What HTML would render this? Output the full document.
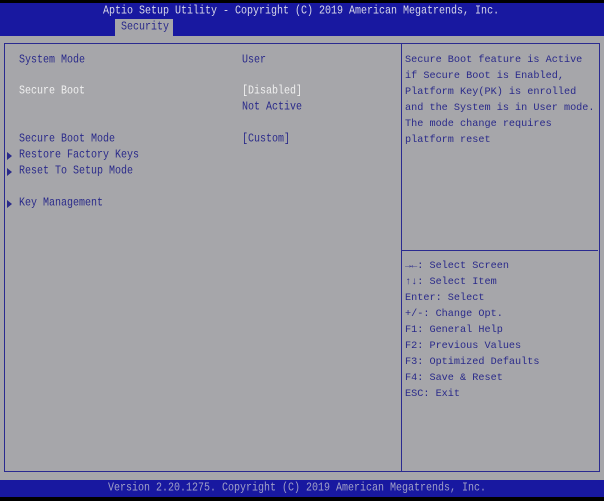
<!DOCTYPE html>
<html><head><meta charset="utf-8"><style>
*{margin:0;padding:0}
body{width:604px;height:501px;background:#000;position:relative;overflow:hidden;font-family:"Liberation Mono",monospace;font-size:10px;color:#2a2a8a}
.t{position:absolute;white-space:pre;line-height:12px;transform:scaleY(1.2);transform-origin:0 0}
#hdr{position:absolute;left:0;top:3px;width:604px;height:33px;background:#1818a0}
#tab{position:absolute;left:115px;top:19px;width:58px;height:17px;background:#a6a6aa}
#main{position:absolute;left:0;top:36px;width:604px;height:444px;background:#a6a6aa}
#box{position:absolute;left:4px;top:43px;width:594px;height:427px;border:1px solid #2a2a90}
#vd{position:absolute;left:401px;top:44px;width:1px;height:427px;background:#2a2a90}
#hd{position:absolute;left:402px;top:250px;width:196px;height:1px;background:#2a2a90}
#ftr{position:absolute;left:0;top:480px;width:604px;height:17px;background:#1818a0}
.w{color:#f0f0f0}
.arr{position:absolute;width:0;height:0;border-left:5px solid #2a2a8a;border-top:4px solid transparent;border-bottom:4px solid transparent}
</style></head><body>
<div id="hdr"></div>
<div class="t w" style="left:103px;top:5px;color:#d8d8e8">Aptio Setup Utility - Copyright (C) 2019 American Megatrends, Inc.</div>
<div id="main"></div>
<div id="tab"></div>
<div class="t" style="left:121px;top:21px">Security</div>
<div id="box"></div><div id="vd"></div><div id="hd"></div>
<div class="t" style="left:19px;top:54px">System Mode</div>
<div class="t" style="left:242px;top:54px">User</div>
<div class="t w" style="left:19px;top:85px">Secure Boot</div>
<div class="t w" style="left:242px;top:85px">[Disabled]</div>
<div class="t" style="left:242px;top:101px">Not Active</div>
<div class="t" style="left:19px;top:133px">Secure Boot Mode</div>
<div class="t" style="left:242px;top:133px">[Custom]</div>
<div class="arr" style="left:7px;top:152px"></div>
<div class="t" style="left:19px;top:149px">Restore Factory Keys</div>
<div class="arr" style="left:7px;top:168px"></div>
<div class="t" style="left:19px;top:165px">Reset To Setup Mode</div>
<div class="arr" style="left:7px;top:200px"></div>
<div class="t" style="left:19px;top:197px">Key Management</div>
<div class="t" style="left:405px;top:53px;line-height:16px;transform:none;font-size:10.2px">Secure Boot feature is Active
if Secure Boot is Enabled,
Platform Key(PK) is enrolled
and the System is in User mode.
The mode change requires
platform reset</div>
<div class="t" style="left:405px;top:259px;line-height:16px;transform:none;font-size:10.2px">→←: Select Screen
↑↓: Select Item
Enter: Select
+/-: Change Opt.
F1: General Help
F2: Previous Values
F3: Optimized Defaults
F4: Save &amp; Reset
ESC: Exit</div>
<div id="ftr"></div>
<div class="t" style="left:108px;top:482px;color:#a0a0c8">Version 2.20.1275. Copyright (C) 2019 American Megatrends, Inc.</div>
</body></html>
